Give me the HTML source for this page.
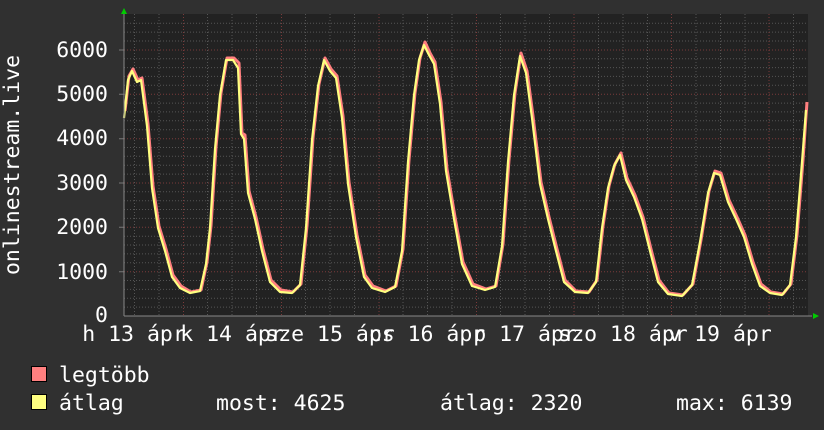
<!DOCTYPE html>
<html><head><meta charset="utf-8"><style>
body{margin:0;background:#303030;width:824px;height:430px;overflow:hidden}
svg{display:block}
text{font-family:"DejaVu Sans Mono","Liberation Mono",monospace;font-size:21.5px;fill:#fff}
</style></head><body>
<svg width="824" height="430" viewBox="0 0 824 430">
<rect x="0" y="0" width="824" height="430" fill="#303030"/>
<rect x="124" y="14" width="684" height="302" fill="#222"/>
<g stroke="#555" stroke-width="1" stroke-dasharray="1,2">
<path d="M124 307.1H808M124 298.3H808M124 289.4H808M124 280.5H808M124 262.8H808M124 253.9H808M124 245H808M124 236.2H808M124 218.4H808M124 209.5H808M124 200.7H808M124 191.8H808M124 174.1H808M124 165.2H808M124 156.3H808M124 147.5H808M124 129.7H808M124 120.8H808M124 111.9H808M124 103.1H808M124 85.3H808M124 76.4H808M124 67.6H808M124 58.7H808M124 41H808M124 32.1H808M124 23.2H808"/>
<path d="M134.5 14V316M159 14V316M207.5 14V316M232 14V316M256.5 14V316M305.5 14V316M330 14V316M354.5 14V316M403 14V316M427.5 14V316M452 14V316M500.5 14V316M525 14V316M549.5 14V316M598.5 14V316M623 14V316M647.5 14V316M696 14V316M720.5 14V316M745 14V316M793.5 14V316"/>
</g>
<g stroke="#7a3a3a" stroke-width="1" stroke-dasharray="1,2">
<path d="M124 271.7H808M124 227.3H808M124 183H808M124 138.7H808M124 94.3H808M124 50H808"/>
<path d="M183.5 14V316M281.5 14V316M379 14V316M476.5 14V316M574 14V316M671.5 14V316M769 14V316"/>
</g>
<path d="M119 271.7h5M119 227.3h5M119 183h5M119 138.7h5M119 94.3h5M119 50h5" stroke="#777"/>
<polyline fill="none" stroke="#ff7f7f" stroke-width="3" stroke-linejoin="round" transform="translate(1,-1)" points="124,112 128,77 132,70 137,81 141,79 147,125 152,187 158,227 165,250 172,276 180,287 190,293 200,291 206,263 210,227 215,148 220,94 226,59 233,59 238,64 241,134 244,136 248,192 255,218 262,250 270,281 280,291 292,293 300,285 306,227 312,139 318,85 324,59 330,70 336,77 342,117 348,183 356,236 364,276 372,287 385,292 395,287 402,250 408,161 414,94 419,59 424,43 429,54 434,63 440,103 446,170 454,218 462,263 472,285 485,290 495,287 502,245 508,161 514,94 520,54 526,72 532,117 540,183 548,218 556,250 564,281 575,292 588,293 596,281 602,227 608,187 614,165 620,154 626,179 634,196 642,218 650,250 658,281 668,294 682,296 692,285 700,241 708,192 714,172 720,174 728,201 736,218 744,236 752,263 760,285 770,293 782,295 790,285 796,236 802,161 806,103"/>
<polyline fill="none" stroke="#ffff80" stroke-width="2.2" stroke-linejoin="round" points="124,118 128,80 132,71 137,82 141,80 147,126 152,188 158,228 165,251 172,277 180,288 190,293 200,291 206,264 210,228 215,149 220,95 226,60 233,60 238,68 241,134 244,139 248,193 255,219 262,251 270,282 280,292 292,293 300,285 306,228 312,140 318,86 324,60 330,71 336,78 342,118 348,184 356,237 364,277 372,288 385,292 395,287 402,251 408,162 414,95 419,60 424,45 429,55 434,64 440,104 446,171 454,219 462,264 472,286 485,290 495,287 502,246 508,162 514,95 520,56 526,73 532,118 540,184 548,219 556,251 564,282 575,292 588,293 596,282 602,228 608,188 614,166 620,155 626,180 634,197 642,219 650,251 658,282 668,294 682,296 692,285 700,242 708,193 714,173 720,175 728,202 736,219 744,237 752,264 760,286 770,293 782,295 790,285 796,237 802,162 806,110"/>
<path d="M124 316H812M124 316V10" stroke="#888" stroke-width="1"/>
<path d="M121 14L124 8L127 14Z M813 313L819 316L813 319Z" fill="#0c0"/>
<g text-anchor="end">
<text x="108" y="57">6000</text><text x="108" y="101">5000</text><text x="108" y="145">4000</text><text x="108" y="190">3000</text><text x="108" y="234">2000</text><text x="108" y="279">1000</text><text x="108" y="322">0</text>
</g>
<text transform="translate(19,165) rotate(-90)" text-anchor="middle">onlinestream.live</text>
<g text-anchor="middle">
<text x="134" y="341">h 13 ápr</text><text x="232" y="341">k 14 ápr</text><text x="330" y="341">sze 15 ápr</text><text x="427" y="341">cs 16 ápr</text><text x="525" y="341">p 17 ápr</text><text x="623" y="341">szo 18 ápr</text><text x="720" y="341">v 19 ápr</text>
</g>
<rect x="31.5" y="366.5" width="15" height="15" fill="#ff8080" stroke="#000"/>
<rect x="31.5" y="394.5" width="15" height="15" fill="#ffff80" stroke="#000"/>
<text x="59" y="382">legtöbb</text>
<text x="59" y="410">átlag</text>
<text x="216" y="410">most: 4625</text>
<text x="440" y="410">átlag: 2320</text>
<text x="676" y="410">max: 6139</text>
</svg>
</body></html>
